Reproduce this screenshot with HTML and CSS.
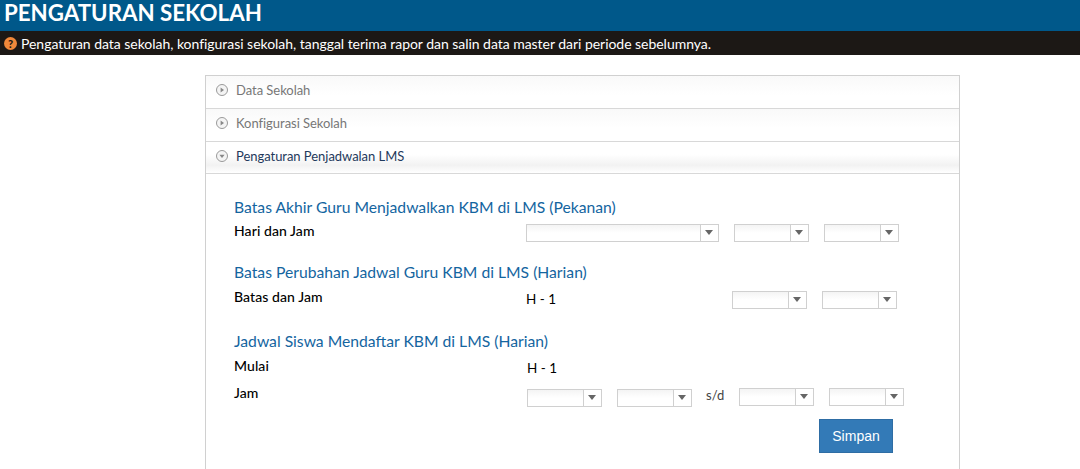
FILE: index.html
```html
<!DOCTYPE html>
<html lang="en">

<head>
  <meta charset="UTF-8" />
  <title>Pengaturan Sekolah</title>
  <link rel="stylesheet" href="styles.css">
</head>

<body>
  <div class="page-title">PENGATURAN SEKOLAH</div>
  <div class="page-info">
    <span class="info-icon">?</span>
    <span>Pengaturan data sekolah, konfigurasi sekolah, tanggal terima rapor dan salin data master dari periode sebelumnya.</span>
  </div>

  <div class="panel">
    <!-- Accordion headers -->
    <div class="acc-header">
      <svg class="acc-icon" width="12" height="12" viewBox="0 0 12 12"><circle cx="6" cy="6" r="5.5" fill="#f4f4f4" stroke="#999"/><path d="M4.6 3.4 8 6 4.6 8.6z" fill="#888"/></svg>
      Data Sekolah
    </div>
    <div class="acc-header">
      <svg class="acc-icon" width="12" height="12" viewBox="0 0 12 12"><circle cx="6" cy="6" r="5.5" fill="#f4f4f4" stroke="#999"/><path d="M4.6 3.4 8 6 4.6 8.6z" fill="#888"/></svg>
      Konfigurasi Sekolah
    </div>
    <div class="acc-header active">
      <svg class="acc-icon" width="12" height="12" viewBox="0 0 12 12"><circle cx="6" cy="6" r="5.5" fill="#f4f4f4" stroke="#999"/><path d="M3.4 4.8H8.6L6 8z" fill="#888"/></svg>
      Pengaturan Penjadwalan LMS
    </div>

    <div class="acc-body">
      <h3 class="sec-one">Batas Akhir Guru Menjadwalkan KBM di LMS (Pekanan)</h3>
      <div class="row row-first">
        <label>Hari dan Jam</label>
        <div class="combo combo-wide"><span class="arrow"></span></div>
        <div class="combo"><span class="arrow"></span></div>
        <div class="combo"><span class="arrow"></span></div>
      </div>

      <h3 class="sec-two">Batas Perubahan Jadwal Guru KBM di LMS (Harian)</h3>
      <div class="row row-second">
        <label>Batas dan Jam</label>
        <span class="value">H - 1</span>
        <div class="combo"><span class="arrow"></span></div>
        <div class="combo"><span class="arrow"></span></div>
      </div>

      <h3 class="sec-three">Jadwal Siswa Mendaftar KBM di LMS (Harian)</h3>
      <div class="row row-start">
        <label>Mulai</label>
        <span class="value">H - 1</span>
      </div>
      <div class="row row-time">
        <label>Jam</label>
        <div class="combo"><span class="arrow"></span></div>
        <div class="combo"><span class="arrow"></span></div>
        <span class="until">s/d</span>
        <div class="combo combo-up"><span class="arrow"></span></div>
        <div class="combo combo-up"><span class="arrow"></span></div>
      </div>

      <div class="actions">
        <button type="button">Simpan</button>
      </div>
    </div>
  </div>
</body>

</html>
```

FILE: styles.css
```css
* {
  margin: 0;
  padding: 0;
  box-sizing: border-box;
}

html,
body {
  height: 469px;
  overflow: hidden;
}

body {
  background: #fff;
  font-family: "Lato", sans-serif;
  font-size: 14px;
  color: #000;
}

.page-title {
  height: 31px;
  padding-left: 4px;
  background: #00588a;
  color: #fff;
  font-size: 22.3px;
  font-weight: 700;
  line-height: 25px;
}

.page-info {
  display: flex;
  align-items: center;
  gap: 4px;
  height: 24px;
  padding-left: 4px;
  background: #1c1815;
  color: #fff;
  font-size: 14px;
  letter-spacing: -0.035px;
}

.info-icon {
  width: 13px;
  height: 13px;
  border-radius: 50%;
  background: #f0883a;
  color: #1c1815;
  font-size: 11px;
  font-weight: 900;
  line-height: 13px;
  text-align: center;
}

.panel {
  width: 755px;
  height: 394px;
  margin: 20px 0 0 205px;
  border: 1px solid #d0d0d0;
  border-bottom: none;
}

.acc-header {
  display: flex;
  align-items: center;
  gap: 8px;
  height: 33px;
  padding: 0 0 4px 10px;
  border-bottom: 1px solid #d8d8d8;
  background: linear-gradient(#f9f9f9, #fff 60%);
  color: #777;
  font-size: 13px;
  letter-spacing: -0.04px;
}

.acc-header.active {
  height: 32px;
  padding-bottom: 3px;
  color: #1f3a5c;
  background: linear-gradient(#fff 40%, #f2f2f2 75%, #fff);
}

.acc-body {
  padding: 0 28px;
}

h3 {
  color: #14659f;
  font-size: 15.7px;
  font-weight: 400;
  line-height: 18px;
}

.sec-one {
  padding-top: 24px;
}

.sec-two {
  margin-top: 21px;
}

.sec-three {
  margin-top: 23px;
}

.row {
  display: flex;
  align-items: flex-start;
}

.row label {
  flex: none;
  width: 292px;
  font-weight: 500;
  font-size: 14px;
  line-height: 18px;
  letter-spacing: 0.08px;
}

.value {
  font-size: 13.5px;
  line-height: 18px;
}

.row-first {
  margin-top: 8px;
  gap: 15px;
}

.row-first label {
  width: 277px;
  margin-top: -2px;
}

.row-second {
  margin-top: 10px;
}

.row-second label {
  margin-top: -3px;
}

.row-second .value {
  width: 206px;
  margin-top: -1px;
}

.row-second .combo + .combo {
  margin-left: 15px;
}

.row-start {
  margin-top: 7px;
}

.row-start .value {
  margin-top: 2px;
  margin-left: 1px;
}

.row-time {
  margin-top: 12px;
}

.row-time label {
  width: 293px;
  margin-top: -5px;
}

.row-time .combo + .combo {
  margin-left: 15px;
}

.until {
  width: 47px;
  margin-top: -3px;
  padding-left: 14px;
  font-size: 13px;
  line-height: 18px;
  color: #444;
}

.combo {
  position: relative;
  flex: none;
  width: 75px;
  height: 18px;
  border: 1px solid #d0d0d0;
  background: linear-gradient(#f4f4f4, #fff 50%);
}

.combo-wide {
  width: 193px;
}

.combo-up {
  top: -1px;
}

.arrow {
  position: absolute;
  top: 0;
  right: 0;
  width: 18px;
  height: 16px;
  border-left: 1px solid #d0d0d0;
  background: #fff;
}

.arrow::after {
  content: "";
  position: absolute;
  top: 5px;
  left: 4px;
  border-left: 4px solid transparent;
  border-right: 4px solid transparent;
  border-top: 5px solid #666;
}

.actions {
  display: flex;
  justify-content: flex-end;
  margin-top: 12px;
  padding-right: 38px;
}

button {
  width: 74px;
  height: 34px;
  border: 1px solid #2e6da4;
  background: #337ab7;
  color: #fff;
  font-family: "Liberation Sans", sans-serif;
  font-size: 14px;
}
```
